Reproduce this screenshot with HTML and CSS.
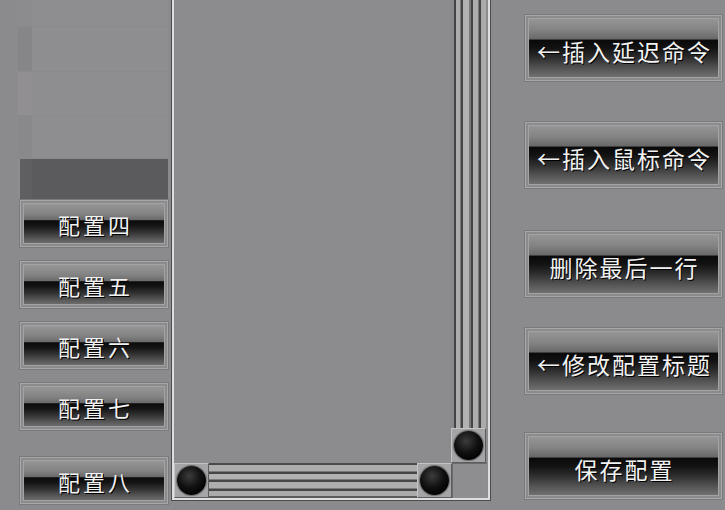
FILE: index.html
```html
<!DOCTYPE html>
<html lang="zh">
<head>
<meta charset="utf-8">
<link rel="stylesheet" href="styles.css">
</head>
<body>
<div class="screen">
  <div class="left">
    <div class="list">
      <div class="row r1"><span class="cell"></span></div>
      <div class="row r2"><span class="cell"></span></div>
      <div class="row r3"><span class="cell"></span></div>
      <div class="row r4"><span class="cell"></span></div>
      <div class="row sel"><span class="cell"></span></div>
    </div>
    <div class="lbtns">
      <div class="btn lbtn"><div class="face">配置四</div></div>
      <div class="btn lbtn"><div class="face">配置五</div></div>
      <div class="btn lbtn"><div class="face">配置六</div></div>
      <div class="btn lbtn"><div class="face">配置七</div></div>
      <div class="btn lbtn last"><div class="face">配置八</div></div>
    </div>
  </div>

  <div class="panel">
    <div class="panel-main">
      <div class="content"></div>
      <div class="vscroll">
        <div class="vtrack"></div>
        <div class="ball"><span class="dot"></span></div>
      </div>
    </div>
    <div class="panel-foot">
      <div class="hscroll">
        <div class="ball"><span class="dot"></span></div>
        <div class="htrack"></div>
        <div class="ball"><span class="dot"></span></div>
      </div>
      <div class="corner"></div>
    </div>
  </div>

  <div class="right">
    <div class="btn rbtn b1"><div class="face">←插入延迟命令</div></div>
    <div class="btn rbtn b2"><div class="face">←插入鼠标命令</div></div>
    <div class="btn rbtn b3"><div class="face">删除最后一行</div></div>
    <div class="btn rbtn b4"><div class="face">←修改配置标题</div></div>
    <div class="btn rbtn b5"><div class="face">保存配置</div></div>
  </div>
</div>
</body>
</html>
```

FILE: styles.css
```css
html, body {
  margin: 0;
  padding: 0;
  background: #8b8a8c;
}

body {
  width: 725px;
  height: 510px;
  overflow: hidden;
  font-family: "Noto Sans CJK SC", "Noto Sans CJK JP", sans-serif;
}

.screen {
  display: flex;
  width: 725px;
  height: 510px;
  overflow: hidden;
}

/* ---------- left column ---------- */
.left {
  width: 171px;
  flex: none;
  display: flex;
  flex-direction: column;
}

.list {
  height: 199px;
  margin-left: 18px;
  margin-right: 3px;
  display: flex;
  flex-direction: column;
  background: #8e8d8f;
}

.row {
  display: flex;
  border-bottom: 1px solid #8a898b;
}

.row .cell {
  width: 14px;
  flex: none;
  background: #8a898b;
}

.r1 { height: 26px; }
.r2 { height: 44px; }
.r3 { height: 44px; }
.r4 { height: 42px; }
.r1 .cell { background: #8c8b8d; }
.r2 .cell { background: #868587; }
.r3 .cell { background: #918f92; }
.r4 .cell { background: #89888a; }

.row.sel {
  height: 40px;
  margin-left: 2px;
  background: #5b5a5c;
  border-bottom: none;
}

.row.sel .cell {
  background: #5f5e60;
  width: 12px;
}

.lbtns {
  display: flex;
  flex-direction: column;
  padding-left: 20px;
  padding-right: 3px;
}

/* ---------- buttons ---------- */
.btn {
  box-sizing: border-box;
  border: 1px solid #a7a6a8;
  box-shadow: 0 0 0 1px #7a797b;
  padding: 2px;
  background: #8b8a8c;
}

.face {
  box-sizing: border-box;
  height: 100%;
  border: 1px solid #a3a3a3;
  display: flex;
  align-items: center;
  justify-content: center;
  color: #f2f2f2;
  text-shadow: 1px 1px 0 #000;
  white-space: nowrap;
  font-weight: 400;
}

.lbtn {
  height: 47px;
  margin-top: 14px;
}

.lbtn:first-child { margin-top: 1px; }
.lbtn.last { margin-top: 27px; }

.lbtn .face {
  font-size: 22px;
  letter-spacing: 3px;
  padding-left: 3px;
  background: linear-gradient(to bottom,
    #979697 0%, #848384 25%, #6c6b6c 40%,
    #0b0b0b 43%, #141414 55%, #333233 72%, #5a595a 90%, #6d6c6d 100%);
}

.rbtn {
  width: 197px;
  height: 66px;
}

.rbtn .face {
  font-size: 23px;
  letter-spacing: 2px;
  padding-top: 6px;
  padding-left: 2px;
  background: linear-gradient(to bottom,
    #969596 0%, #858485 18%, #6a696a 34%,
    #0a0a0a 37%, #121212 50%, #2d2c2d 66%, #555455 85%, #707070 100%);
}

.b1 { margin-top: 15px; }
.b2 { margin-top: 41px; }
.b3 { margin-top: 43px; }
.b4 { margin-top: 31px; }
.b5 { margin-top: 39px; }

/* ---------- panel ---------- */
.panel {
  flex: none;
  box-sizing: border-box;
  width: 318px;
  height: 510px;
  margin-top: -10px;
  margin-left: 1px;
  border: 2px solid #dedede;
  box-shadow: 0 0 0 1px #4c4b4d;
  background: #8c8b8d;
  display: flex;
  flex-direction: column;
}

.panel-main {
  flex: 1;
  display: flex;
}

.content {
  flex: 1;
}

.vscroll {
  width: 35px;
  margin-right: 2px;
  display: flex;
  flex-direction: column;
}

.vtrack {
  flex: 1;
  background: linear-gradient(to right,
    #8a898b 0 3px, #454545 3px 5px, #adadad 5px 9px, #7a7a7a 9px 10px,
    #454545 10px 12px, #b2b2b2 12px 18px, #7a7a7a 18px 20px, #454545 20px 22px,
    #adadad 22px 27px, #7a7a7a 27px 28px, #454545 28px 30px, #aaaaaa 30px 35px);
}

.panel-foot {
  height: 35px;
  display: flex;
}

.hscroll {
  width: 278px;
  display: flex;
}

.htrack {
  flex: 1;
  background: linear-gradient(to bottom,
    #4a4a4a 0 2px, #adadad 2px 8px, #7a7a7a 8px 9px, #454545 9px 11px,
    #b2b2b2 11px 16px, #7a7a7a 16px 17px, #454545 17px 19px, #adadad 19px 25px,
    #7a7a7a 25px 26px, #454545 26px 28px, #aaaaaa 28px 33px, #5a5a5a 33px 35px);
}

.corner {
  width: 35px;
  box-sizing: border-box;
  border-top: 1px solid #6a696b;
  border-left: 1px solid #6a696b;
  background: #8e8d8f;
}

.ball {
  flex: none;
  box-sizing: border-box;
  width: 35px;
  height: 35px;
  background: #a5a4a6;
  border: 1px solid #5c5b5d;
  border-top-color: #c4c4c4;
  border-left-color: #c4c4c4;
  display: flex;
  align-items: center;
  justify-content: center;
}

.dot {
  width: 29px;
  height: 29px;
  border-radius: 50%;
  background: radial-gradient(circle at 42% 35%, #3c3c3c 0%, #111 45%, #020202 75%);
  box-shadow: 0 0 1px 1px #6a6a6a;
}

/* ---------- right column ---------- */
.right {
  flex: none;
  margin-left: 35px;
  display: flex;
  flex-direction: column;
}
```
